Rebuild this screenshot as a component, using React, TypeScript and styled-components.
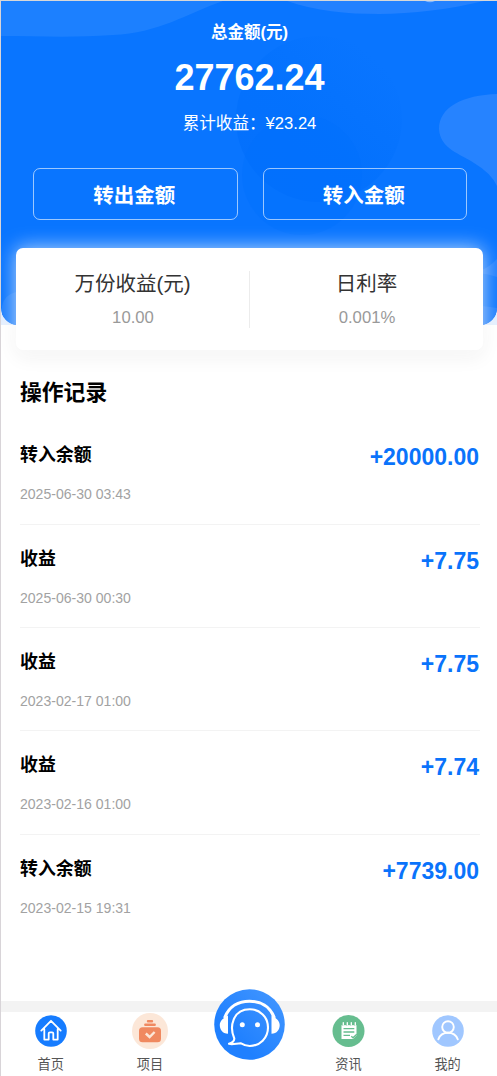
import React from "react";
import styled, { createGlobalStyle } from "styled-components";

const Global = createGlobalStyle`
  * { box-sizing: border-box; }
  body { margin: 0; background: #fff; font-family: "Liberation Sans", "Noto Sans CJK SC", sans-serif; }
`;

const Page = styled.div`
  height: 1076px;
  display: flex;
  flex-direction: column;
  border-left: 1px solid #d8d4d8;
  border-top: 1px solid #d8d8d8;
  overflow: hidden;
`;

const Hero = styled.header`
  position: relative;
  flex: none;
  height: 324px;
  display: flex;
  flex-direction: column;
  align-items: center;
  padding-top: 20px;
  color: #fff;
  background: #e4efff;
`;

const Backdrop = styled.svg`
  position: absolute;
  inset: 0;
  width: 100%;
  height: 100%;
  border-radius: 0 0 17px 17px;
`;

const HeroText = styled.div<{ $size: number; $line: number; $bold?: boolean; $top?: number }>`
  position: relative;
  font-size: ${(p) => p.$size}px;
  line-height: ${(p) => p.$line}px;
  font-weight: ${(p) => (p.$bold ? 700 : 400)};
  margin-top: ${(p) => p.$top ?? 0}px;
  padding-left: 1px;
  white-space: nowrap;
`;

const Actions = styled.div`
  position: relative;
  align-self: stretch;
  display: flex;
  gap: 25px;
  margin: 33px 30px 0 32px;
`;

const Action = styled.button`
  flex: 1;
  height: 52px;
  padding: 0 2px 0 0;
  border: 1px solid rgba(255, 255, 255, 0.6);
  border-radius: 7px;
  background: transparent;
  color: #fff;
  font: 700 20.5px "Liberation Sans", "Noto Sans CJK SC", sans-serif;
`;

const RateCard = styled.section`
  position: relative;
  flex: none;
  height: 102px;
  margin: -77px 14px 0 15px;
  display: flex;
  align-items: center;
  background: #fff;
  border-radius: 7px;
  box-shadow: 0 0 20px rgba(255, 255, 255, 0.75), 0 7px 20px rgba(0, 0, 0, 0.06);
`;

const Rate = styled.div`
  flex: 1;
  text-align: center;
  & + & { border-left: 1px solid #ececec; }
`;

const RateName = styled.div`
  font-size: 20.5px;
  line-height: 26px;
  color: #333;
`;

const RateValue = styled.div`
  font-size: 16.7px;
  line-height: 20px;
  margin-top: 11px;
  padding-left: 1px;
  color: #999;
`;

const Records = styled.main`
  flex: 1;
  padding: 27px 17px 0 19px;
`;

const Heading = styled.h2`
  margin: 0 0 26px;
  font-size: 21.8px;
  line-height: 32px;
  color: #000;
`;

const Row = styled.article`
  display: flex;
  justify-content: space-between;
  height: 103.4px;
  padding-top: 19px;
  &:not(:first-of-type) { border-top: 1px solid #f3f3f3; }
  &:first-of-type { height: 88.6px; padding-top: 5px; }
`;

const Kind = styled.div`
  padding-top: 1px;
  font-size: 17.9px;
  line-height: 28px;
  font-weight: 700;
  color: #000;
`;

const Stamp = styled.time`
  display: block;
  margin-top: 15px;
  font-size: 14.05px;
  line-height: 20px;
  color: #a2a2a2;
`;

const Amount = styled.div`
  padding: 3px 1px 0 0;
  font-size: 23px;
  line-height: 28px;
  font-weight: 700;
  color: #0a73fb;
`;

const TabBar = styled.nav`
  position: relative;
  flex: none;
  height: 75px;
  display: grid;
  grid-template-columns: repeat(5, 1fr);
  border-top: 11px solid #f3f3f3;
`;

const Tab = styled.a`
  display: flex;
  flex-direction: column;
  align-items: center;
  padding-left: 0.4px;
  color: #555;
  font-size: 13.2px;
  line-height: 20px;
  svg { display: block; width: 36px; height: 36px; margin: 1.4px 0 5.6px; }
`;

const Service = styled.svg`
  position: absolute;
  left: 213px;
  top: -23px;
  width: 71px;
  height: 71px;
`;

const records = [
  ["转入余额", "2025-06-30 03:43", "+20000.00"],
  ["收益", "2025-06-30 00:30", "+7.75"],
  ["收益", "2023-02-17 01:00", "+7.75"],
  ["收益", "2023-02-16 01:00", "+7.74"],
  ["转入余额", "2023-02-15 19:31", "+7739.00"],
];

const HomeIcon = () => (
  <svg viewBox="0 0 36 36" fill="none">
    <circle cx="18" cy="18" r="15.8" fill="#167cff" />
    <path d="M8.3 17.6 18 7.8l9.7 9.8M11.3 16v10.6h4.4V20.5q0-1.2 1.2-1.2h2.2q1.2 0 1.2 1.2v6.1h4.4V16" stroke="#fff" strokeWidth="1.8" strokeLinejoin="round" strokeLinecap="round" />
  </svg>
);

const ProjectIcon = () => (
  <svg viewBox="0 0 36 36" fill="none">
    <circle cx="18" cy="18" r="18" fill="#fce7d8" />
    <rect x="7" y="14.3" width="22" height="15" rx="3.5" fill="#f08960" />
    <path d="M13.3 11.8h9.4M16 8.2h4" stroke="#f08960" strokeWidth="2.4" strokeLinecap="round" />
    <path d="m13.8 20.5 3.8 3.5 5-5" stroke="#fce7d8" strokeWidth="2.4" />
  </svg>
);

const NewsIcon = () => (
  <svg viewBox="0 0 36 36" fill="none">
    <circle cx="18.5" cy="18" r="16" fill="#66bd8f" />
    <path d="M11.5 12h15v10.5L23 26H11.5z" fill="#fff" />
    <path d="M13 9.4v3.2M17 9.4v3.2M21 9.4v3.2M25 9.4v3.2" stroke="#66bd8f" strokeWidth="2.7" />
    <path d="M13.3 9.6v2.6M17.3 9.6v2.6M21.3 9.6v2.6M25.3 9.6v2.6" stroke="#fff" strokeWidth="1.3" strokeLinecap="round" />
    <path d="M13.5 15.7h10.8M13.5 19h10.8M13.5 22.3H20" stroke="#66bd8f" strokeWidth="1.3" />
    <path d="m21.3 23.3 1.7 1.5 3.8-3.6" stroke="#66bd8f" strokeWidth="1.3" />
  </svg>
);

const MineIcon = () => (
  <svg viewBox="0 0 36 36" fill="none" stroke="#fff" strokeWidth="1.9" strokeLinecap="round">
    <circle cx="18" cy="18" r="15.8" fill="#a0c7ff" stroke="none" />
    <circle cx="18" cy="14" r="5.8" />
    <path d="M8.3 26.3C10 21.8 13.6 19.8 18 19.8s8 2 9.8 6.5" />
  </svg>
);

export default function App() {
  return (
    <Page>
      <Global />
      <Hero>
        <Backdrop viewBox="0 0 496 324" preserveAspectRatio="none">
          <defs>
            <linearGradient id="orb" x1="0.1" y1="0.9" x2="0.8" y2="0.1">
              <stop offset="0" stopColor="#006dfb" />
              <stop offset="0.45" stopColor="#006ffc" />
              <stop offset="1" stopColor="#0975ff" />
            </linearGradient>
          </defs>
          <rect width="496" height="324" fill="#0975ff" />
          <circle cx="318" cy="118" r="83" fill="url(#orb)" opacity="0.6" />
          <circle cx="301" cy="174" r="60" fill="#006ffc" opacity="0.35" />
          <path d="M0 0h222C185 13 158 32 112 34C70 37 35 35 0 35Z" fill="#1c80ff" />
          <path d="M286 0C315 10 345 13 378 13S450 8 483 0Z" fill="#2381ff" />
          <path d="M424 0q5 2.5 10 0Z" fill="#81b6ff" />
          <path d="M496 93C462 94 438 106 438 128C439 148 460 153 473 162Q490 172 496 185Z" fill="#2683ff" />
          <path d="M496 258Q482 273 462 273V324H496Z" fill="#2080ff" />
          <path d="M462 273q16-3 34 3v31q-18-3-34-3Z" fill="#0d77ff" />
          <path d="M1 324V305Q3 294 15 291V324Z" fill="#1c7fff" />
        </Backdrop>
        <HeroText $size={16.5} $line={22} $bold>总金额(元)</HeroText>
        <HeroText $size={36} $line={42} $bold $top={14}>27762.24</HeroText>
        <HeroText $size={16.6} $line={22} $top={14}>累计收益：¥23.24</HeroText>
        <Actions>
          <Action>转出金额</Action>
          <Action>转入金额</Action>
        </Actions>
      </Hero>
      <RateCard>
        <Rate>
          <RateName>万份收益(元)</RateName>
          <RateValue>10.00</RateValue>
        </Rate>
        <Rate>
          <RateName>日利率</RateName>
          <RateValue>0.001%</RateValue>
        </Rate>
      </RateCard>
      <Records>
        <Heading>操作记录</Heading>
        {records.map(([kind, stamp, amount]) => (
          <Row key={stamp}>
            <div>
              <Kind>{kind}</Kind>
              <Stamp>{stamp}</Stamp>
            </div>
            <Amount>{amount}</Amount>
          </Row>
        ))}
      </Records>
      <TabBar>
        <Tab><HomeIcon />首页</Tab>
        <Tab><ProjectIcon />项目</Tab>
        <span />
        <Tab><NewsIcon />资讯</Tab>
        <Tab><MineIcon />我的</Tab>
        <Service viewBox="0 0 71 71" fill="none">
          <defs>
            <linearGradient id="service" x1="0.3" y1="0.7" x2="1" y2="0">
              <stop stopColor="#1f80ff" />
              <stop offset="1" stopColor="#4598ff" />
            </linearGradient>
          </defs>
          <circle cx="35.5" cy="35.5" r="35.3" fill="url(#service)" />
          <path d="M10.5 29C15 17 25 12.2 35.5 12.2S56 17 60.5 29" stroke="#fff" strokeWidth="3" />
          <path d="M14 26.5v18.3C8.5 44.5 5.8 40.5 5.8 36.2S9 29 14 26.5ZM57.5 26.5v18.3c5.5-.3 8.2-4.3 8.2-8.6S62.5 29 57.5 26.5Z" fill="#fff" />
          <path d="M20.3 49.5C15 37.5 19 20.2 35.7 20.2C46 20.2 54 28 54 38.5S46 57 35.7 57C32 57 29.5 56 26.5 54.2C22.5 54.3 19 55.8 15 54.8C18.5 53.5 20.4 52 20.3 49.5Z" stroke="#fff" strokeWidth="2.1" strokeLinejoin="round" />
          <circle cx="28.3" cy="35.8" r="2.5" fill="#fff" />
          <circle cx="43.5" cy="35.8" r="2.5" fill="#fff" />
        </Service>
      </TabBar>
    </Page>
  );
}
